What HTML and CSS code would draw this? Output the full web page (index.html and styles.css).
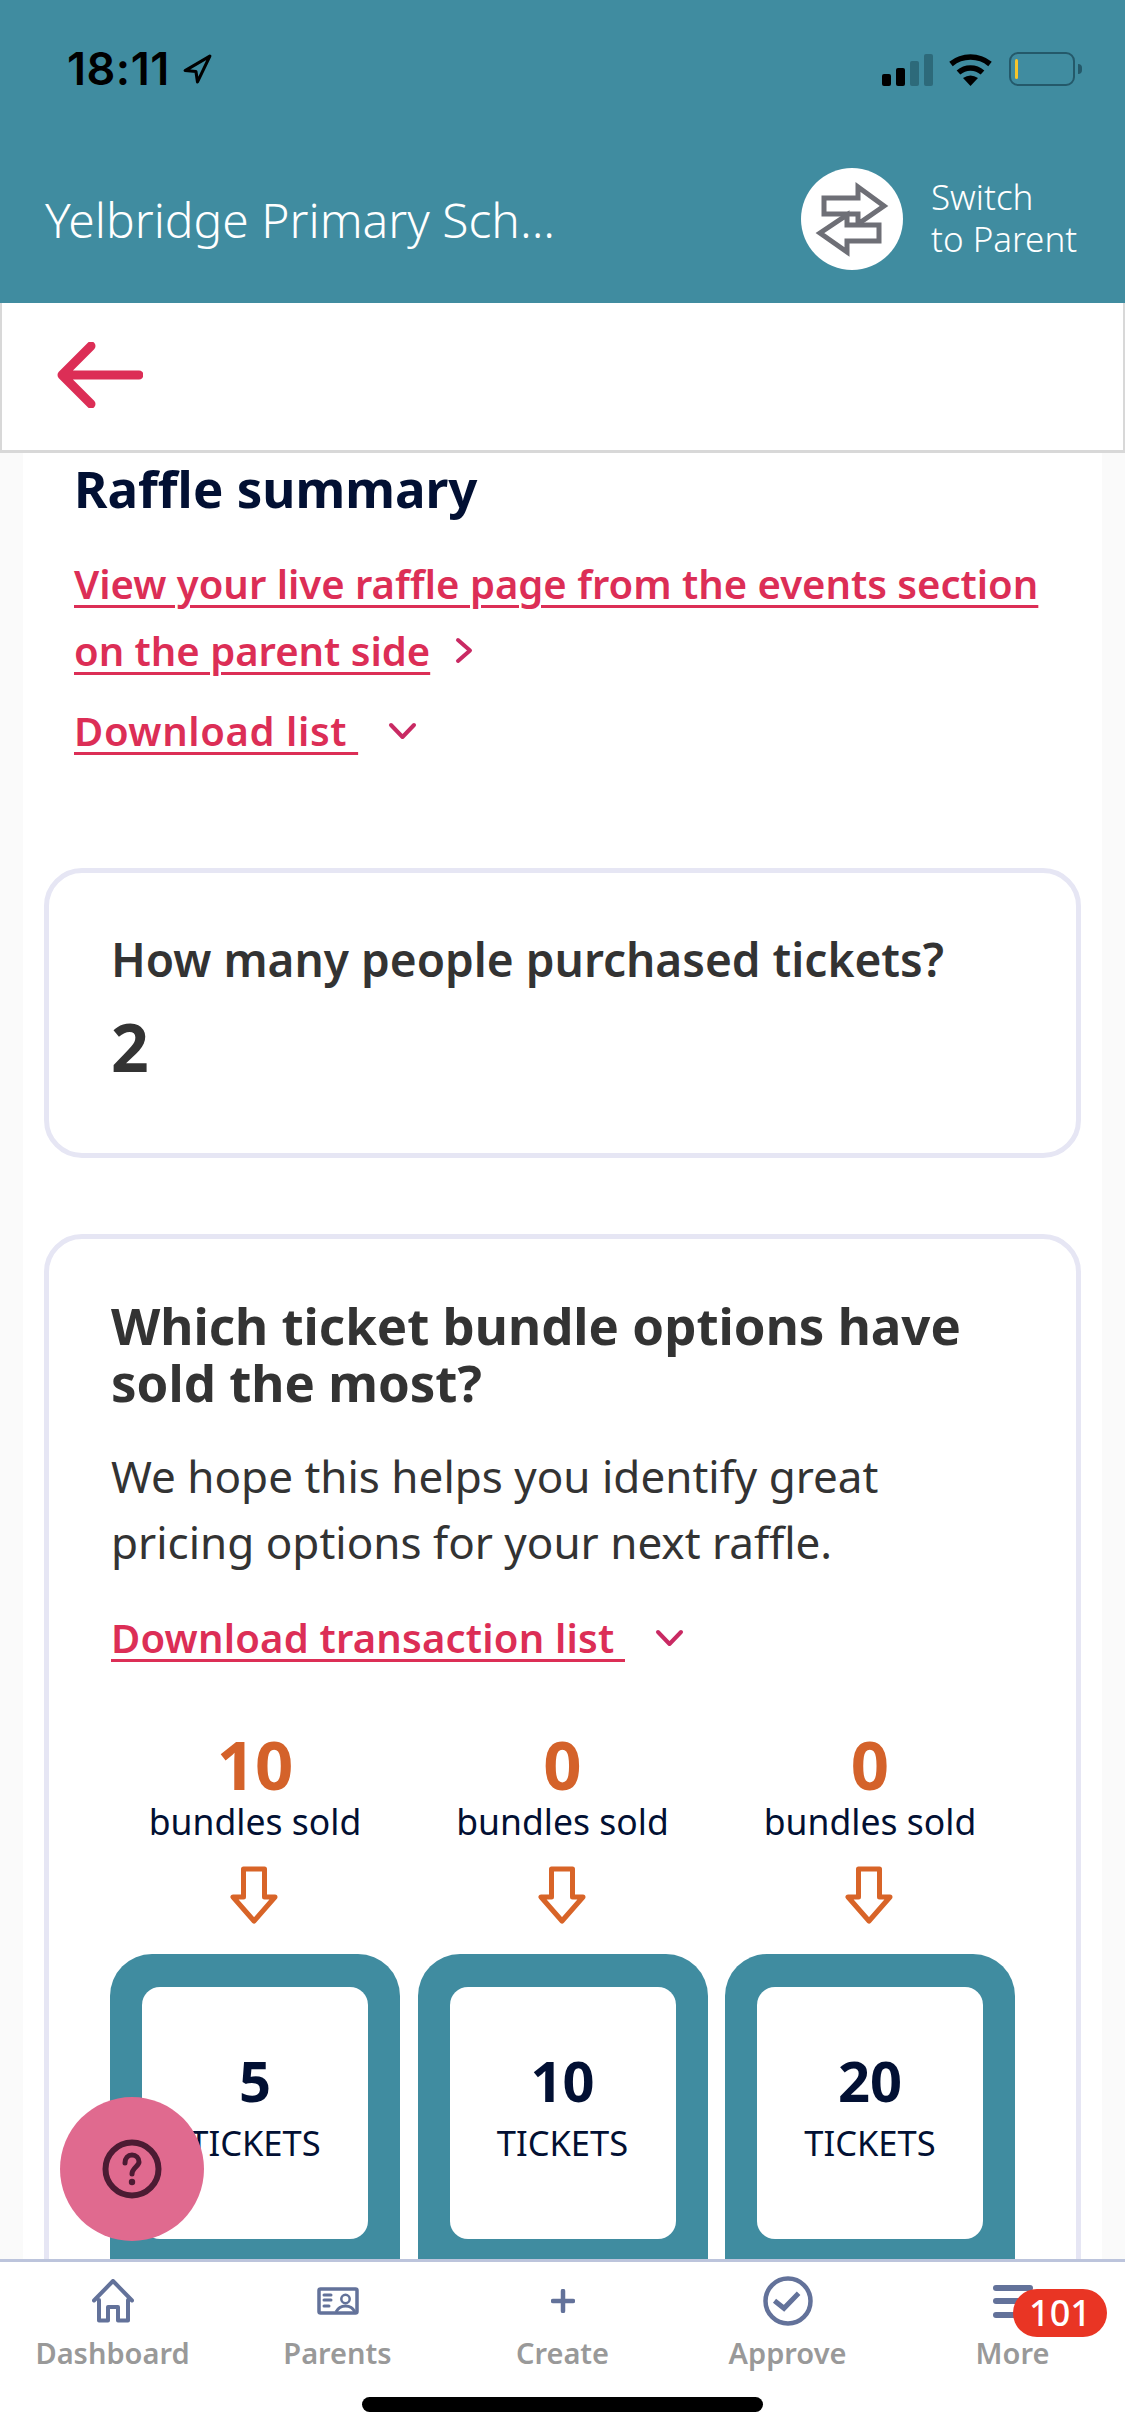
FILE: index.html
```html
<!DOCTYPE html>
<html lang="en">
<head>
    <meta charset="UTF-8">
    <meta name="viewport" content="width=device-width, initial-scale=1.0">
    <title>Raffle summary</title>
    <link rel="stylesheet" href="styles.css">
</head>
<body>
    <div class="phone">
        <!-- status bar and school header -->
        <div class="header">
            <div class="status-bar">
                <div class="clock">
                    <span>18:11</span>
                    <svg class="location" viewBox="0 0 30 31"><path d="M27 3 L3 17 L13.5 18 L15 28 Z" fill="none" stroke="#000" stroke-width="3" stroke-linejoin="round"/></svg>
                </div>
                <div class="status-icons">
                    <div class="signal">
                        <span class="bar bar-1"></span>
                        <span class="bar bar-2"></span>
                        <span class="bar bar-3"></span>
                        <span class="bar bar-4"></span>
                    </div>
                    <svg class="wifi" viewBox="0 0 45 33">
                        <path d="M3 11 A31 31 0 0 1 42 11" fill="none" stroke="#000" stroke-width="5.5"/>
                        <path d="M10.5 19.5 A18 18 0 0 1 34.5 19.5" fill="none" stroke="#000" stroke-width="5.5"/>
                        <path d="M22.5 33 L15 25 Q22.5 20 30 25 Z" fill="#000"/>
                    </svg>
                    <div class="battery"><span class="battery-level"></span></div>
                    <span class="battery-nub"></span>
                </div>
            </div>
            <div class="school-row">
                <div class="school-name">Yelbridge Primary Sch...</div>
                <div class="switch-icon">
                    <svg viewBox="0 0 102 102">
                        <path d="M23 30 H57 V19 L83 38 L57 56 V46 H23 Z" fill="#fff" stroke="#6e6f76" stroke-width="5"/>
                        <path d="M78 57 H46 V47 L19 65 L46 84 V73 H78 Z" fill="#fff" stroke="#6e6f76" stroke-width="5"/>
                    </svg>
                </div>
                <div class="switch-text">Switch<br>to Parent</div>
            </div>
        </div>

        <div class="back-bar">
            <svg class="back-arrow" viewBox="0 0 86 66"><path d="M34 4 L5 33 L34 62 M5 33 H82" fill="none" stroke="#dc2e56" stroke-width="9" stroke-linecap="round" stroke-linejoin="round"/></svg>
        </div>

        <!-- scrolling content -->
        <div class="content">
            <div class="summary">
                <h1>Raffle summary</h1>
                <p class="link-line first-link"><a>View your live raffle page from the events section</a></p>
                <p class="link-line"><a>on the parent side</a><svg class="chevron-right" viewBox="0 0 18 27"><path d="M3 3 L15 13.5 L3 24" fill="none" stroke="#c92a63" stroke-width="4" stroke-linecap="round" stroke-linejoin="round"/></svg></p>
                <p class="link-line download-link"><a>Download list&nbsp;</a><svg class="chevron-down" viewBox="0 0 29 18"><path d="M3 3 L14.5 15 L26 3" fill="none" stroke="#c92a63" stroke-width="4" stroke-linecap="round" stroke-linejoin="round"/></svg></p>
            </div>

            <div class="card people-card">
                <h3>How many people purchased tickets?</h3>
                <div class="people-count">2</div>
            </div>

            <div class="card bundle-card">
                <h2>Which ticket bundle options have<br>sold the most?</h2>
                <p class="intro">We hope this helps you identify great<br>pricing options for your next raffle.</p>
                <p class="link-line transaction-link"><a>Download transaction list&nbsp;</a><svg class="chevron-down" viewBox="0 0 29 18"><path d="M3 3 L14.5 15 L26 3" fill="none" stroke="#c92a63" stroke-width="4" stroke-linecap="round" stroke-linejoin="round"/></svg></p>

                <div class="bundle-grid">
                    <div class="bundle">
                        <div class="sold-count">10</div>
                        <div class="sold-label">bundles sold</div>
                        <svg class="sold-arrow" viewBox="0 0 48 58"><path d="M13.5 3 H34.5 V31 H45 L24 55 L3 31 H13.5 Z" fill="none" stroke="#d86428" stroke-width="5" stroke-linejoin="round"/></svg>
                        <div class="bundle-box"><div class="bundle-inner"><div class="ticket-count">5</div><div class="ticket-label">TICKETS</div></div></div>
                    </div>
                    <div class="bundle">
                        <div class="sold-count">0</div>
                        <div class="sold-label">bundles sold</div>
                        <svg class="sold-arrow" viewBox="0 0 48 58"><path d="M13.5 3 H34.5 V31 H45 L24 55 L3 31 H13.5 Z" fill="none" stroke="#d86428" stroke-width="5" stroke-linejoin="round"/></svg>
                        <div class="bundle-box"><div class="bundle-inner"><div class="ticket-count">10</div><div class="ticket-label">TICKETS</div></div></div>
                    </div>
                    <div class="bundle">
                        <div class="sold-count">0</div>
                        <div class="sold-label">bundles sold</div>
                        <svg class="sold-arrow" viewBox="0 0 48 58"><path d="M13.5 3 H34.5 V31 H45 L24 55 L3 31 H13.5 Z" fill="none" stroke="#d86428" stroke-width="5" stroke-linejoin="round"/></svg>
                        <div class="bundle-box"><div class="bundle-inner"><div class="ticket-count">20</div><div class="ticket-label">TICKETS</div></div></div>
                    </div>
                </div>
            </div>
        </div>

        <!-- bottom tabs -->
        <div class="tabbar">
            <div class="tab">
                <div class="tab-icon">
                    <svg class="icon-home" viewBox="0 0 42 44"><path d="M2 21.5 L21 2 L40 21.5 M7 21 V41.5 H16 V28 H26 V41.5 H36 V21" fill="none" stroke="#63729a" stroke-width="4" stroke-linecap="round" stroke-linejoin="round"/></svg>
                </div>
                <span>Dashboard</span>
            </div>
            <div class="tab">
                <div class="tab-icon">
                    <svg class="icon-parents" viewBox="0 0 42 28">
                        <rect x="2" y="2" width="38" height="24" rx="1.5" fill="none" stroke="#63729a" stroke-width="3.5"/>
                        <path d="M7 8 H14 M7 13 H14 M7 19 H12" stroke="#63729a" stroke-width="3" stroke-linecap="round"/>
                        <circle cx="28.5" cy="12" r="4.2" fill="none" stroke="#63729a" stroke-width="2.5"/>
                        <path d="M19 25 Q22 19 28.5 19 Q35 19 38 25" fill="none" stroke="#63729a" stroke-width="3"/>
                    </svg>
                </div>
                <span>Parents</span>
            </div>
            <div class="tab">
                <div class="tab-icon">
                    <svg class="icon-plus" viewBox="0 0 24 24"><path d="M12 2 V22 M2 12 H22" stroke="#63729a" stroke-width="4.5" stroke-linecap="round"/></svg>
                </div>
                <span>Create</span>
            </div>
            <div class="tab">
                <div class="tab-icon">
                    <svg class="icon-approve" viewBox="0 0 50 50">
                        <circle cx="25" cy="25" r="22.5" fill="none" stroke="#63729a" stroke-width="4.5"/>
                        <path d="M11.5 24.7 L21 32.3 L35.6 17.3" fill="none" stroke="#63729a" stroke-width="5"/>
                    </svg>
                </div>
                <span>Approve</span>
            </div>
            <div class="tab more-tab">
                <div class="tab-icon">
                    <div class="hamburger"><i></i><i></i><i></i></div>
                    <div class="badge">101</div>
                </div>
                <span>More</span>
            </div>
            <div class="home-indicator"></div>
        </div>

        <!-- help button floats over the page -->
        <div class="help-button">
            <svg viewBox="0 0 60 60">
                <circle cx="30" cy="30" r="26.5" fill="none" stroke="#4c1b33" stroke-width="6"/>
                <path d="M23 24 C23 19 26 16 30 16 C34 16 37 19 37 23 C37 27 30 29 30 35" fill="none" stroke="#4c1b33" stroke-width="5" stroke-linecap="round"/>
                <circle cx="30" cy="43" r="3.2" fill="#4c1b33"/>
            </svg>
        </div>
    </div>
</body>
</html>
```

FILE: styles.css
```css
* {
    box-sizing: border-box;
}
body {
    margin: 0;
    background-color: #fff;
    font-family: "Noto Sans", sans-serif;
}
.phone {
    position: relative;
    width: 1125px;
    height: 2436px;
    display: flex;
    flex-direction: column;
    overflow: hidden;
}

/* header */
.header {
    height: 303px;
    flex-shrink: 0;
    background-color: #408ca0;
    padding: 47px 48px 0 45px;
}
.status-bar {
    display: flex;
    justify-content: space-between;
    align-items: center;
    height: 44px;
    padding-left: 22px;
}
.clock {
    display: flex;
    align-items: center;
    gap: 12px;
    font-family: Inter, sans-serif;
    font-size: 45px;
    font-weight: 600;
    line-height: 44px;
    letter-spacing: 0.5px;
    color: #000;
}
.location {
    width: 31px;
    height: 32px;
}
.status-icons {
    display: flex;
    align-items: center;
    margin-right: -5px;
}
.signal {
    display: flex;
    align-items: flex-end;
    gap: 5px;
    height: 32px;
    margin-top: 1px;
}
.bar {
    width: 9px;
    border-radius: 2px;
    background-color: #000;
}
.bar-1 { height: 12px; }
.bar-2 { height: 18px; }
.bar-3 { height: 25px; background-color: #2d6a7a; }
.bar-4 { height: 32px; background-color: #2d6a7a; }
.wifi {
    width: 45px;
    height: 33px;
    margin-left: 15px;
}
.battery {
    width: 66px;
    height: 34px;
    margin-left: 16px;
    border: 2.5px solid #24596a;
    border-radius: 9px;
    padding: 5px 4px;
}
.battery-level {
    display: block;
    width: 3px;
    height: 20px;
    border-radius: 2px;
    background-color: #f5c52b;
}
.battery-nub {
    width: 4px;
    height: 10px;
    margin-left: 3px;
    border-radius: 0 4px 4px 0;
    background-color: #24596a;
}
.school-row {
    display: flex;
    align-items: center;
    height: 102px;
    margin-top: 77px;
}
.school-name {
    flex: 1;
    font-size: 48px;
    font-weight: 300;
    color: #fff;
}
.switch-icon {
    width: 102px;
    height: 102px;
    border-radius: 50%;
    background-color: #fff;
}
.switch-icon svg {
    display: block;
    width: 102px;
    height: 102px;
}
.switch-text {
    width: 146px;
    margin-left: 28px;
    margin-top: -2px;
    font-size: 35px;
    font-weight: 300;
    line-height: 42px;
    color: #fff;
    white-space: nowrap;
}

/* back bar */
.back-bar {
    height: 150px;
    flex-shrink: 0;
    display: flex;
    align-items: center;
    padding: 0 0 0 55px;
    background-color: #fff;
    border-left: 2px solid #d8d8d8;
    border-right: 2px solid #d8d8d8;
    border-bottom: 3px solid #d8d8d8;
}
.back-arrow {
    width: 86px;
    height: 66px;
    margin-top: -4px;
}

/* content */
.content {
    flex: 1;
    min-height: 0;
    overflow: hidden;
    padding: 5px 21px 0;
    background-color: #fff;
    border-left: 23px solid #fafafa;
    border-right: 23px solid #fafafa;
}
h1 {
    margin: 0;
    padding-left: 30px;
    font-size: 51px;
    font-weight: 700;
    line-height: 60px;
    color: #021033;
}
.link-line {
    margin: 0;
    display: flex;
    align-items: center;
    font-size: 40px;
    font-weight: 600;
    line-height: 67px;
    white-space: nowrap;
}
.link-line a {
    color: #dc2e56;
    text-decoration: underline;
    text-decoration-thickness: 3px;
    text-underline-offset: 6px;
    white-space: pre;
}
.summary .link-line {
    padding-left: 30px;
}
.first-link {
    margin-top: 32px;
}
.summary .download-link {
    margin-top: 13px;
}
.download-link a {
    letter-spacing: 0.6px;
}
.chevron-right {
    width: 18px;
    height: 27px;
    margin-left: 25px;
}
.chevron-down {
    width: 29px;
    height: 18px;
    margin-left: 30px;
}
.card {
    background-color: #fff;
    border: 5px solid #e6e6f4;
    border-radius: 38px;
}
h3 {
    margin: 0;
    font-size: 46px;
    font-weight: 600;
    line-height: 60px;
    color: #333;
}
.people-card {
    margin-top: 104px;
    padding: 56px 62px 72px;
    height: 290px;
}
.people-count {
    margin-top: 22px;
    font-size: 66px;
    font-weight: 700;
    line-height: 70px;
    color: #333;
}
.bundle-card {
    margin-top: 76px;
    height: 1100px;
    padding: 58px 0 0 62px;
}
h2 {
    margin: 0;
    font-size: 51px;
    font-weight: 700;
    line-height: 57px;
    color: #333;
    white-space: nowrap;
}
.intro {
    margin: 32px 0 0;
    font-size: 44px;
    line-height: 66px;
    color: #333;
    white-space: nowrap;
}
.transaction-link {
    margin-top: 29px;
}
.transaction-link a {
    letter-spacing: 0.2px;
}
.bundle-grid {
    display: grid;
    grid-template-columns: repeat(3, 290px);
    column-gap: 17.5px;
    margin-top: 58px;
    margin-left: -1px;
}
.bundle {
    display: flex;
    flex-direction: column;
    align-items: center;
}
.sold-count {
    font-size: 67px;
    font-weight: 700;
    line-height: 70px;
    color: #d4622a;
}
.sold-label {
    font-size: 35.5px;
    line-height: 44px;
    color: #021033;
}
.sold-arrow {
    width: 48px;
    height: 58px;
    margin-top: 23px;
    margin-left: -2px;
}
.bundle-box {
    width: 290px;
    height: 400px;
    margin-top: 30px;
    padding: 33px 32px;
    border-radius: 42px;
    background-color: #408ca0;
}
.bundle-inner {
    height: 252px;
    padding-top: 63px;
    border-radius: 18px;
    background-color: #fff;
    text-align: center;
}
.ticket-count {
    font-size: 56px;
    font-weight: 700;
    line-height: 60px;
    color: #021033;
}
.ticket-label {
    margin-top: 13px;
    font-size: 34.5px;
    line-height: 40px;
    color: #021033;
}

/* bottom tabs */
.tabbar {
    position: relative;
    height: 177px;
    flex-shrink: 0;
    display: grid;
    grid-template-columns: repeat(5, 1fr);
    align-items: start;
    background-color: #fff;
    border-top: 3px solid #bcc4dc;
    padding-top: 14px;
}
.tab {
    display: flex;
    flex-direction: column;
    align-items: center;
    font-size: 29px;
    font-weight: 600;
    line-height: 40px;
    color: #999;
}
.tab span {
    margin-top: 7px;
}
.tab-icon {
    position: relative;
    height: 50px;
    display: flex;
    align-items: center;
    justify-content: center;
}
.icon-home {
    width: 42px;
    height: 44px;
}
.icon-parents {
    width: 42px;
    height: 28px;
}
.icon-plus {
    width: 24px;
    height: 24px;
}
.icon-approve {
    width: 50px;
    height: 50px;
}
.hamburger {
    width: 40px;
    margin-left: 1px;
}
.hamburger i {
    display: block;
    height: 6px;
    margin: 7.5px 0;
    border-radius: 3px;
    background-color: #63729a;
}
.badge {
    position: absolute;
    left: 21px;
    top: 13px;
    width: 94px;
    height: 48px;
    border-radius: 24px;
    background-color: #e93524;
    color: #fff;
    font-size: 36px;
    font-weight: 500;
    line-height: 48px;
    text-align: center;
}
.home-indicator {
    position: absolute;
    left: 362px;
    bottom: 24px;
    width: 401px;
    height: 15px;
    border-radius: 8px;
    background-color: #000;
}

/* help */
.help-button {
    position: absolute;
    left: 60px;
    top: 2097px;
    width: 144px;
    height: 144px;
    display: flex;
    align-items: center;
    justify-content: center;
    border-radius: 50%;
    background-color: #e06a8f;
}
.help-button svg {
    width: 60px;
    height: 60px;
}
```
